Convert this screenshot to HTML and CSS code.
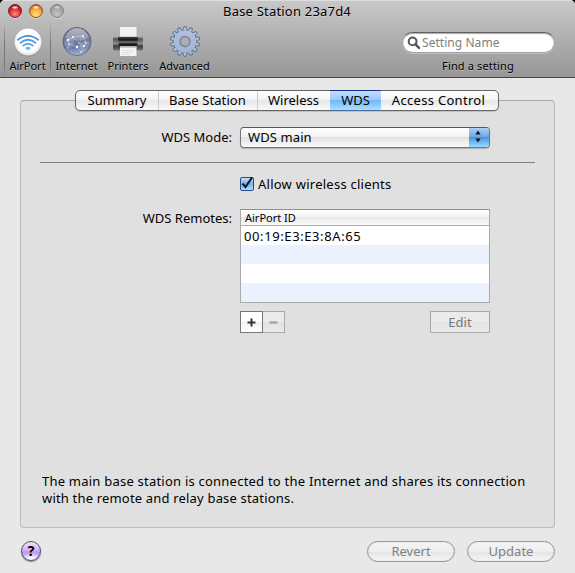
FILE: index.html
```
<!DOCTYPE html>
<html lang="en">
<head>
<meta charset="utf-8">
<title>Base Station 23a7d4</title>
<link rel="stylesheet" href="styles.css">
</head>
<body>
<div class="window">
  <header class="header">
    <div class="titlebar">
      <div class="lights"><i class="light red"></i><i class="light amber"></i><i class="light gray"></i></div>
      <h1 class="title">Base Station 23a7d4</h1>
    </div>
    <nav class="toolbar">
      <div class="tool tool-airport">
        <svg width="32" height="32" viewBox="0 0 32 32">
          <defs>
            <radialGradient id="disc" cx=".5" cy=".45" r=".55"><stop offset=".75" stop-color="#fff"/><stop offset="1" stop-color="#dcdedf"/></radialGradient>
            <linearGradient id="wave" x1="0" y1="8" x2="0" y2="24" gradientUnits="userSpaceOnUse"><stop offset="0" stop-color="#3f86d8"/><stop offset="1" stop-color="#69b8ef"/></linearGradient>
          </defs>
          <circle cx="16" cy="17.2" r="13.6" fill="#777" opacity=".35"/>
          <circle cx="16" cy="16" r="13.5" fill="url(#disc)"/>
          <g fill="none" stroke="url(#wave)" stroke-width="1.8">
            <path d="M5.3 14.2Q16 5.6 26.7 14.2"/><path d="M7.9 17.2Q16 10.4 24.1 17.2"/><path d="M10.6 20.1Q16 15.4 21.4 20.1"/>
          </g>
          <path d="M13.1 22.2Q16 19.4 18.9 22.2L16 24.6Z" fill="#69b8ef"/>
        </svg>
        <span>AirPort</span>
      </div>
      <div class="tool tool-internet">
        <svg width="32" height="32" viewBox="0 0 32 32">
          <defs><linearGradient id="globe" x1="0" y1="0" x2="0" y2="1"><stop offset="0" stop-color="#474d69"/><stop offset=".35" stop-color="#737b9c"/><stop offset=".7" stop-color="#68769f"/><stop offset="1" stop-color="#a9b8d8"/></linearGradient>
          <linearGradient id="shine" x1="0" y1="0" x2="0" y2="1"><stop offset="0" stop-color="#fff" stop-opacity=".6"/><stop offset="1" stop-color="#fff" stop-opacity=".15"/></linearGradient></defs>
          <circle cx="16" cy="15.5" r="14.1" fill="url(#globe)" stroke="#54597a" stroke-width=".7"/>
          <path d="M4 11Q8 2 16 2T28 11Q24 15 16 14.5T4 11Z" fill="url(#shine)"/>
          <path d="M3 17C5 11 12 10 13 15S8 23 6 22ZM19 17Q26 12 29 17Q27 25 22 26Q17 22 19 17Z" fill="#b5c0dd" opacity=".35"/>
          <g fill="none" stroke="#dde6fb" stroke-width=".5" opacity=".75"><path d="M7 14L12 11L22 10L25 17L23 20L18 17L16 21L8 18M22 10L18 17L12 11M16 21L23 20L20 26L16 21M7 14L8 18L6 23"/></g>
          <g fill="#fff"><circle cx="12" cy="11" r="1"/><circle cx="22" cy="10" r=".9"/><circle cx="7" cy="14" r="1.2"/><circle cx="25" cy="17" r=".8"/><circle cx="23" cy="20" r="1.1"/><circle cx="16" cy="21" r="1.2"/><circle cx="8" cy="18" r=".8"/><circle cx="20" cy="26" r=".8"/></g>
        </svg>
        <span>Internet</span>
      </div>
      <div class="tool tool-printers">
        <svg width="32" height="32" viewBox="0 0 32 32">
          <defs><linearGradient id="roller" x1="0" y1="0" x2="0" y2="1"><stop offset="0" stop-color="#aaa"/><stop offset=".18" stop-color="#555"/><stop offset=".5" stop-color="#8b8b8b"/><stop offset=".7" stop-color="#3e3e3e"/><stop offset="1" stop-color="#777"/></linearGradient>
          <linearGradient id="slot" x1="0" y1="0" x2="0" y2="1"><stop offset="0" stop-color="#444"/><stop offset=".3" stop-color="#111"/><stop offset=".5" stop-color="#777"/><stop offset=".75" stop-color="#111"/><stop offset="1" stop-color="#444"/></linearGradient></defs>
          <path d="M8 1H24.5V13H8Z" fill="#f4f4f4"/>
          <path d="M9.5 3.5H23M9.5 6H23M9.5 8.5H23" stroke="#ebebeb"/>
          <rect x="1" y="10.5" width="30" height="14" rx="1.5" fill="url(#roller)"/>
          <path d="M6 11H26L25 21H7Z" fill="url(#slot)"/>
          <path d="M8 20.5H24.5V30H8Z" fill="#f5f5f5"/><path d="M8 20.5H24.5V22H8Z" fill="#ccc"/>
          <path d="M10 24.5H22M10 26.5H20M10 28.5H18" stroke="#d4d4d4" stroke-width=".8" stroke-dasharray="3 .8"/>
        </svg>
        <span>Printers</span>
      </div>
      <div class="tool tool-advanced">
        <svg width="32" height="32" viewBox="-16 -15.5 32 32">
          <defs><linearGradient id="gear" x1="0" y1="-15" x2="0" y2="15" gradientUnits="userSpaceOnUse"><stop offset="0" stop-color="#b4c3dc"/><stop offset="1" stop-color="#9db3d6"/></linearGradient>
          <path id="tooth" d="M-2.2-10.8L-1-14.9H1L2.2-10.8Z"/></defs>
          <g fill="url(#gear)" stroke="#5c6d8e" stroke-width=".9">
            <circle r="11.5"/>
            <g><use href="#tooth"/><use href="#tooth" transform="rotate(25.7)"/><use href="#tooth" transform="rotate(51.4)"/><use href="#tooth" transform="rotate(77.1)"/><use href="#tooth" transform="rotate(102.9)"/><use href="#tooth" transform="rotate(128.6)"/><use href="#tooth" transform="rotate(154.3)"/><use href="#tooth" transform="rotate(180)"/><use href="#tooth" transform="rotate(205.7)"/><use href="#tooth" transform="rotate(231.4)"/><use href="#tooth" transform="rotate(257.1)"/><use href="#tooth" transform="rotate(282.9)"/><use href="#tooth" transform="rotate(308.6)"/><use href="#tooth" transform="rotate(334.3)"/></g>
            <circle r="11.2" stroke="none"/>
            <circle r="5" fill="#adadad" stroke="#73839f" stroke-width="1.4"/>
          </g>
        </svg>
        <span>Advanced</span>
      </div>
      <div class="finder">
        <div class="search">
          <svg width="14" height="14" viewBox="0 0 14 14"><circle cx="5.6" cy="5.4" r="3.9" fill="none" stroke="#555" stroke-width="2"/><path d="M8.4 8.2L12 11.8" stroke="#555" stroke-width="2.5" stroke-linecap="round"/></svg>
          <span>Setting Name</span>
        </div>
        <span class="finder-label">Find a setting</span>
      </div>
    </nav>
  </header>

  <main class="panel">
    <div class="tabs">
      <div class="tab t1">Summary</div><div class="tab t2">Base Station</div><div class="tab t3">Wireless</div><div class="tab t4 active">WDS</div><div class="tab t5">Access Control</div>
    </div>
    <div class="row mode">
      <label class="mode-label">WDS Mode:</label>
      <div class="popup"><span>WDS main</span><div class="arrows"><svg width="20" height="19" viewBox="0 0 20 19"><path d="M9 3.5L11.6 7.5H6.4ZM9 15.5L6.4 11.5H11.6Z" fill="#111"/></svg></div></div>
    </div>
    <hr class="rule">
    <div class="row clients">
      <div class="check"><svg width="18" height="18" viewBox="0 0 18 18"><path d="M4.6 8.6L7.4 12L14.2 2.4" fill="none" stroke="#111b2a" stroke-width="2.1"/></svg></div>
      <span class="clients-label">Allow wireless clients</span>
    </div>
    <div class="row remotes">
      <label class="remotes-label">WDS Remotes:</label>
      <div>
        <div class="table">
          <div class="th">AirPort ID</div>
          <div class="td"><span>00:19:E3:E3:8A:65</span></div><div class="td"></div><div class="td"></div><div class="td"></div>
        </div>
        <div class="actions">
          <div class="sq add"><svg width="11" height="11"><path d="M1.5 5.5H9.5M5.5 1.5V9.5" stroke="#333" stroke-width="2"/></svg></div>
          <div class="sq remove"><svg width="11" height="11"><path d="M1.5 5.5H9.5" stroke="#999" stroke-width="2"/></svg></div>
          <div class="sq edit">Edit</div>
        </div>
      </div>
    </div>
    <p class="note"><span class="l1">The main base station is connected to the Internet and shares its connection</span><br><span class="l2">with the remote and relay base stations.</span></p>
  </main>

  <footer class="footer">
    <div class="help">?</div>
    <div class="pill revert">Revert</div>
    <div class="pill update">Update</div>
  </footer>
</div>
</body>
</html>
```
FILE: styles.css
```
* { box-sizing: border-box; }
body { margin: 0; background: #000; font-family: "Noto Sans", "Open Sans", sans-serif; font-size: 13px; line-height: 17px; color: #000; white-space: nowrap; }
svg { display: block; flex: none; }
.window { width: 575px; height: 573px; background: #e8e8e8; border-radius: 5px 5px 0 0; overflow: hidden; display: flex; flex-direction: column; }
.header { height: 78px; background: linear-gradient(#c8c8c8, #969696); border-top: 1px solid #dedede; border-bottom: 1px solid #444; }
.titlebar { height: 22px; display: grid; grid-template-columns: 72px 1fr 72px; }
.lights { display: flex; gap: 7px; padding: 3px 0 0 8px; }
.light { width: 14px; height: 14px; border-radius: 50%; box-shadow: 0 1px 0 rgba(255,255,255,.45); }
.red { background: radial-gradient(ellipse 4px 2px at 50% 20%, #fff, transparent), radial-gradient(circle at 50% 75%, #ff8f87, #e2363a 45%, #970c17 80%); border: 1px solid #851b22; }
.amber { background: radial-gradient(ellipse 4px 2px at 50% 20%, #fff, transparent), radial-gradient(circle at 50% 80%, #ffe97c, #f8a83b 50%, #b75b13 85%); border: 1px solid #955019; }
.gray { background: radial-gradient(ellipse 4px 2px at 50% 20%, #ddd, transparent), radial-gradient(circle at 50% 75%, #c5c5c5, #a1a1a1 60%, #888); border: 1px solid #838383; }
.title { margin: 0; padding: 2px 1px 0 0; text-align: center; font-size: 13px; font-weight: 400; line-height: 17px; letter-spacing: .2px; text-shadow: 0 1px 0 rgba(255,255,255,.35); }
.toolbar { display: flex; height: 54px; padding-left: 4px; font-size: 11px; line-height: 14px; }
.tool { display: flex; flex-direction: column; align-items: center; padding-top: 3px; text-shadow: 0 1px 0 rgba(255,255,255,.35); }
.tool span { margin-top: 1px; }
.tool-airport { width: 47px; border: solid; border-width: 0 1px; border-image: linear-gradient(transparent, #777 40%, #777 75%, transparent) 1; }
.tool-internet { width: 51px; }
.tool-printers { width: 52px; }
.tool-advanced { width: 61px; }
.finder { margin-left: auto; padding: 9px 20px 0 0; display: flex; flex-direction: column; align-items: center; }
.search { width: 153px; height: 21px; border-radius: 11px; background: #fff; border: 1px solid #a0a0a0; border-top-color: #606060; box-shadow: inset 0 1px 1px #aaa, 0 1px 0 rgba(255,255,255,.3); display: flex; align-items: center; padding-left: 4px; gap: 1px; font-size: 12px; color: #808080; }
.search span { margin-top: 1px; letter-spacing: .05px; }
.finder-label { margin: 6px 0 0 -1px; letter-spacing: .15px; text-shadow: 0 1px 0 rgba(255,255,255,.35); }

.panel { margin: 22px 20px 0; height: 428px; border: 1px solid #bcbcbc; border-top-color: #a8a8a8; border-radius: 4px; background: #e0e0e0; display: flex; flex-direction: column; }
.tabs { width: 424px; height: 21px; margin: -11px 0 0 54px; display: flex; border: 1px solid #656565; border-radius: 5px; background: linear-gradient(#fff, #f4f4f4 45%, #e7e7e7 50%, #fafafa); box-shadow: 0 1px 1px rgba(0,0,0,.15); }
.tab { display: flex; align-items: center; justify-content: center; border-left: 1px solid #c9c9c9; height: 19px; padding-bottom: 1px; }
.t1 { width: 82px; border-left: 0; }
.t2 { width: 99px; padding-right: 1px; letter-spacing: .1px; }
.t3 { width: 73px; padding-right: 1px; }
.t4 { width: 51px; }
.t5 { flex: 1; border-left: 0; padding-right: 2px; letter-spacing: .3px; }
.tab.active { border: 0; margin: -1px 0; padding-bottom: 1px; height: 21px; border-top: 1px solid #1c2d91; border-bottom: 1px solid #4b6a96; background: linear-gradient(#c2defb, #9bcbfa 45%, #71b7fa 50%, #a9e1ff); }
.row { display: flex; }
.mode { margin-top: 15px; height: 22px; align-items: center; }
.mode-label, .remotes-label { width: 211px; text-align: right; margin-right: 8px; }
.popup { width: 250px; height: 21px; display: flex; align-items: center; justify-content: space-between; padding-left: 7px; letter-spacing: .1px; border: 1px solid #747474; border-top-color: #585858; border-radius: 4px; overflow: hidden; background: linear-gradient(#fff, #f2f2f2 45%, #e2e2e2 50%, #f9f9f9); box-shadow: 0 1px 1px rgba(0,0,0,.2); }
.arrows { width: 20px; height: 20px; background: linear-gradient(#b3d2f4, #6fa8e9 48%, #4b92e1 52%, #96dcff); }
.rule { margin: 14px 19px 0; border: 0; height: 1px; background: #808080; flex: none; align-self: stretch; }
.clients { margin: 13px 0 0 219px; height: 17px; align-items: center; }
.check { width: 14px; height: 14px; margin-top: -2px; border: 1px solid #284a7e; border-radius: 2px; background: linear-gradient(#cbe2fa, #73aeea 50%, #a9e5ff); }
.check svg { margin: -3px 0 0 -3px; }
.clients-label { margin-left: 4px; letter-spacing: .25px; }
.remotes { margin-top: 16px; align-items: flex-start; }
.remotes-label { padding-top: 1px; }
.table { width: 250px; height: 94px; border: 1px solid #aaa; border-top-color: #8f8f8f; background: #fff; }
.th { height: 16px; padding-left: 4px; font-size: 11px; line-height: 15px; border-bottom: 1px solid #aaa; background: linear-gradient(#fff, #f4f4f4 45%, #e9e9e9 50%, #fafafa); }
.td { height: 19px; padding: 1px 0 0 3px; line-height: 19px; letter-spacing: .6px; }
.td:nth-child(odd) { background: #ebf1fd; }
.actions { display: flex; margin-top: 8px; width: 250px; }
.sq { height: 22px; border: 1px solid #a8a8a8; display: flex; align-items: center; justify-content: center; background: linear-gradient(#ebebeb 50%, #e3e3e3 50%, #e9e9e9); color: #777; }
.add { width: 23px; border-color: #777; background: linear-gradient(#fff 50%, #f1f1f1 50%, #fff); }
.remove { width: 22px; border-left: 0; }
.edit { width: 60px; margin-left: auto; }
.note { margin: auto 0 20px 21px; }
.l1 { letter-spacing: .225px; }
.l2 { letter-spacing: .18px; }
.footer { display: flex; padding: 13px 20px 0; }
.help { width: 20px; height: 20px; border-radius: 50%; border: 1px solid #5c4d7c; background: radial-gradient(ellipse 9px 6px at 50% 92%, #fff, transparent), linear-gradient(#eee6fb, #c9aef4 50%, #b896f1 55%, #e2d4fa); box-shadow: 0 1px 1px #777; margin: 0 auto 0 1px; text-align: center; font-weight: 700; line-height: 18px; font-size: 14px; }
.pill { width: 88px; height: 21px; border: 1px solid #999; border-radius: 11px; background: linear-gradient(#f4f4f4, #efefef 50%, #e6e6e6 54%, #f5f5f5); box-shadow: inset 0 0 1px #aaa; color: #808080; display: flex; align-items: center; justify-content: center; padding-bottom: 1px; }
.update { margin-left: 12px; }
```
